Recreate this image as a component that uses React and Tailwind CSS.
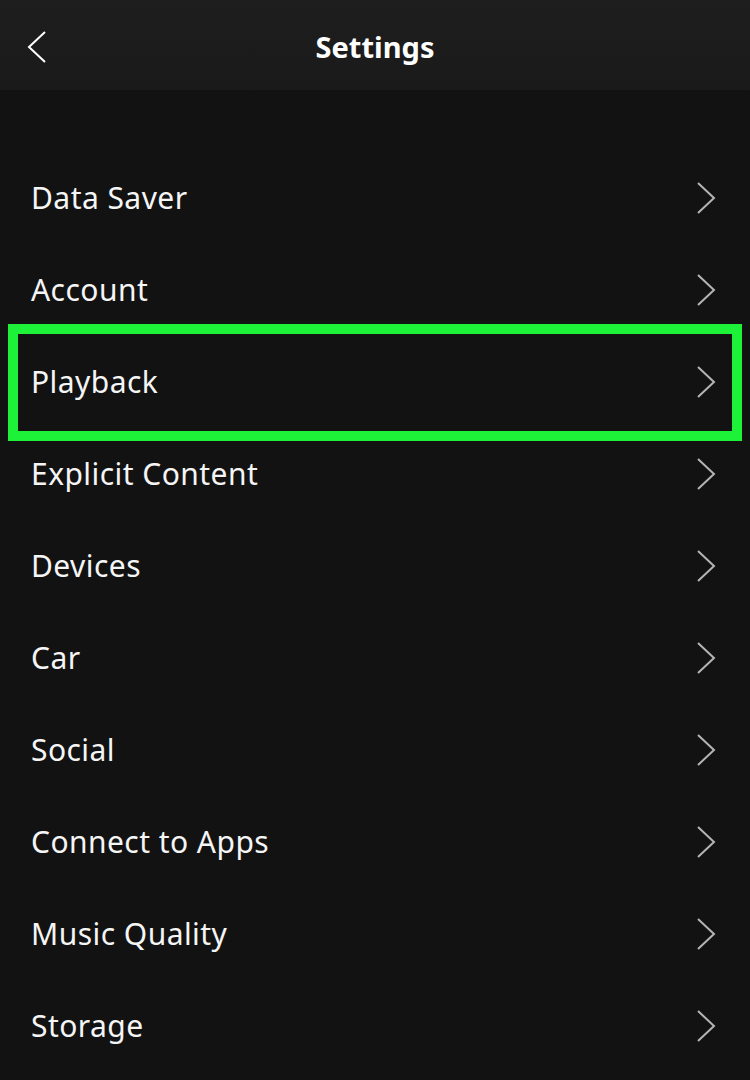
import React from "react";

const items = [
  "Data Saver",
  "Account",
  "Playback",
  "Explicit Content",
  "Devices",
  "Car",
  "Social",
  "Connect to Apps",
  "Music Quality",
  "Storage",
];

function Chevron({ left, className }) {
  return (
    <svg width="20" height="32" viewBox="0 0 20 32" className={className}>
      <polyline
        points={left ? "18,1 2,16 18,31" : "2,1 18,16 2,31"}
        fill="none"
        stroke="currentColor"
        strokeWidth="2"
        strokeLinejoin="miter"
      />
    </svg>
  );
}

export default function App() {
  return (
    <div
      className="min-h-[1080px] w-[750px] bg-[#121212] text-white overflow-hidden"
      style={{ fontFamily: '"Noto Sans", "Liberation Sans", sans-serif' }}
    >
      <div className="h-[90px] bg-gradient-to-b from-[#1e1e1e] to-[#1a1a1a] flex items-center relative">
        <div className="absolute left-[27px] top-[31px] text-white">
          <Chevron left />
        </div>
        <h1 className="w-full text-center text-[29px] font-bold leading-none pt-[3px]">
          Settings
        </h1>
      </div>
      <div className="pt-[62px]">
        {items.map((label) => (
          <div
            key={label}
            className="relative h-[92px] flex items-center justify-between pl-[31px] pr-[34px]"
          >
            <span className="text-[30px] leading-none tracking-[0.45px] text-[#f5f5f5]">
              {label}
            </span>
            <Chevron className="text-[#b5b5b5]" />
            {label === "Playback" && (
              <span className="absolute left-[8px] right-[8px] top-[-12px] bottom-[-13px] border-[10px] border-[#1ef238] pointer-events-none" />
            )}
          </div>
        ))}
      </div>
    </div>
  );
}
